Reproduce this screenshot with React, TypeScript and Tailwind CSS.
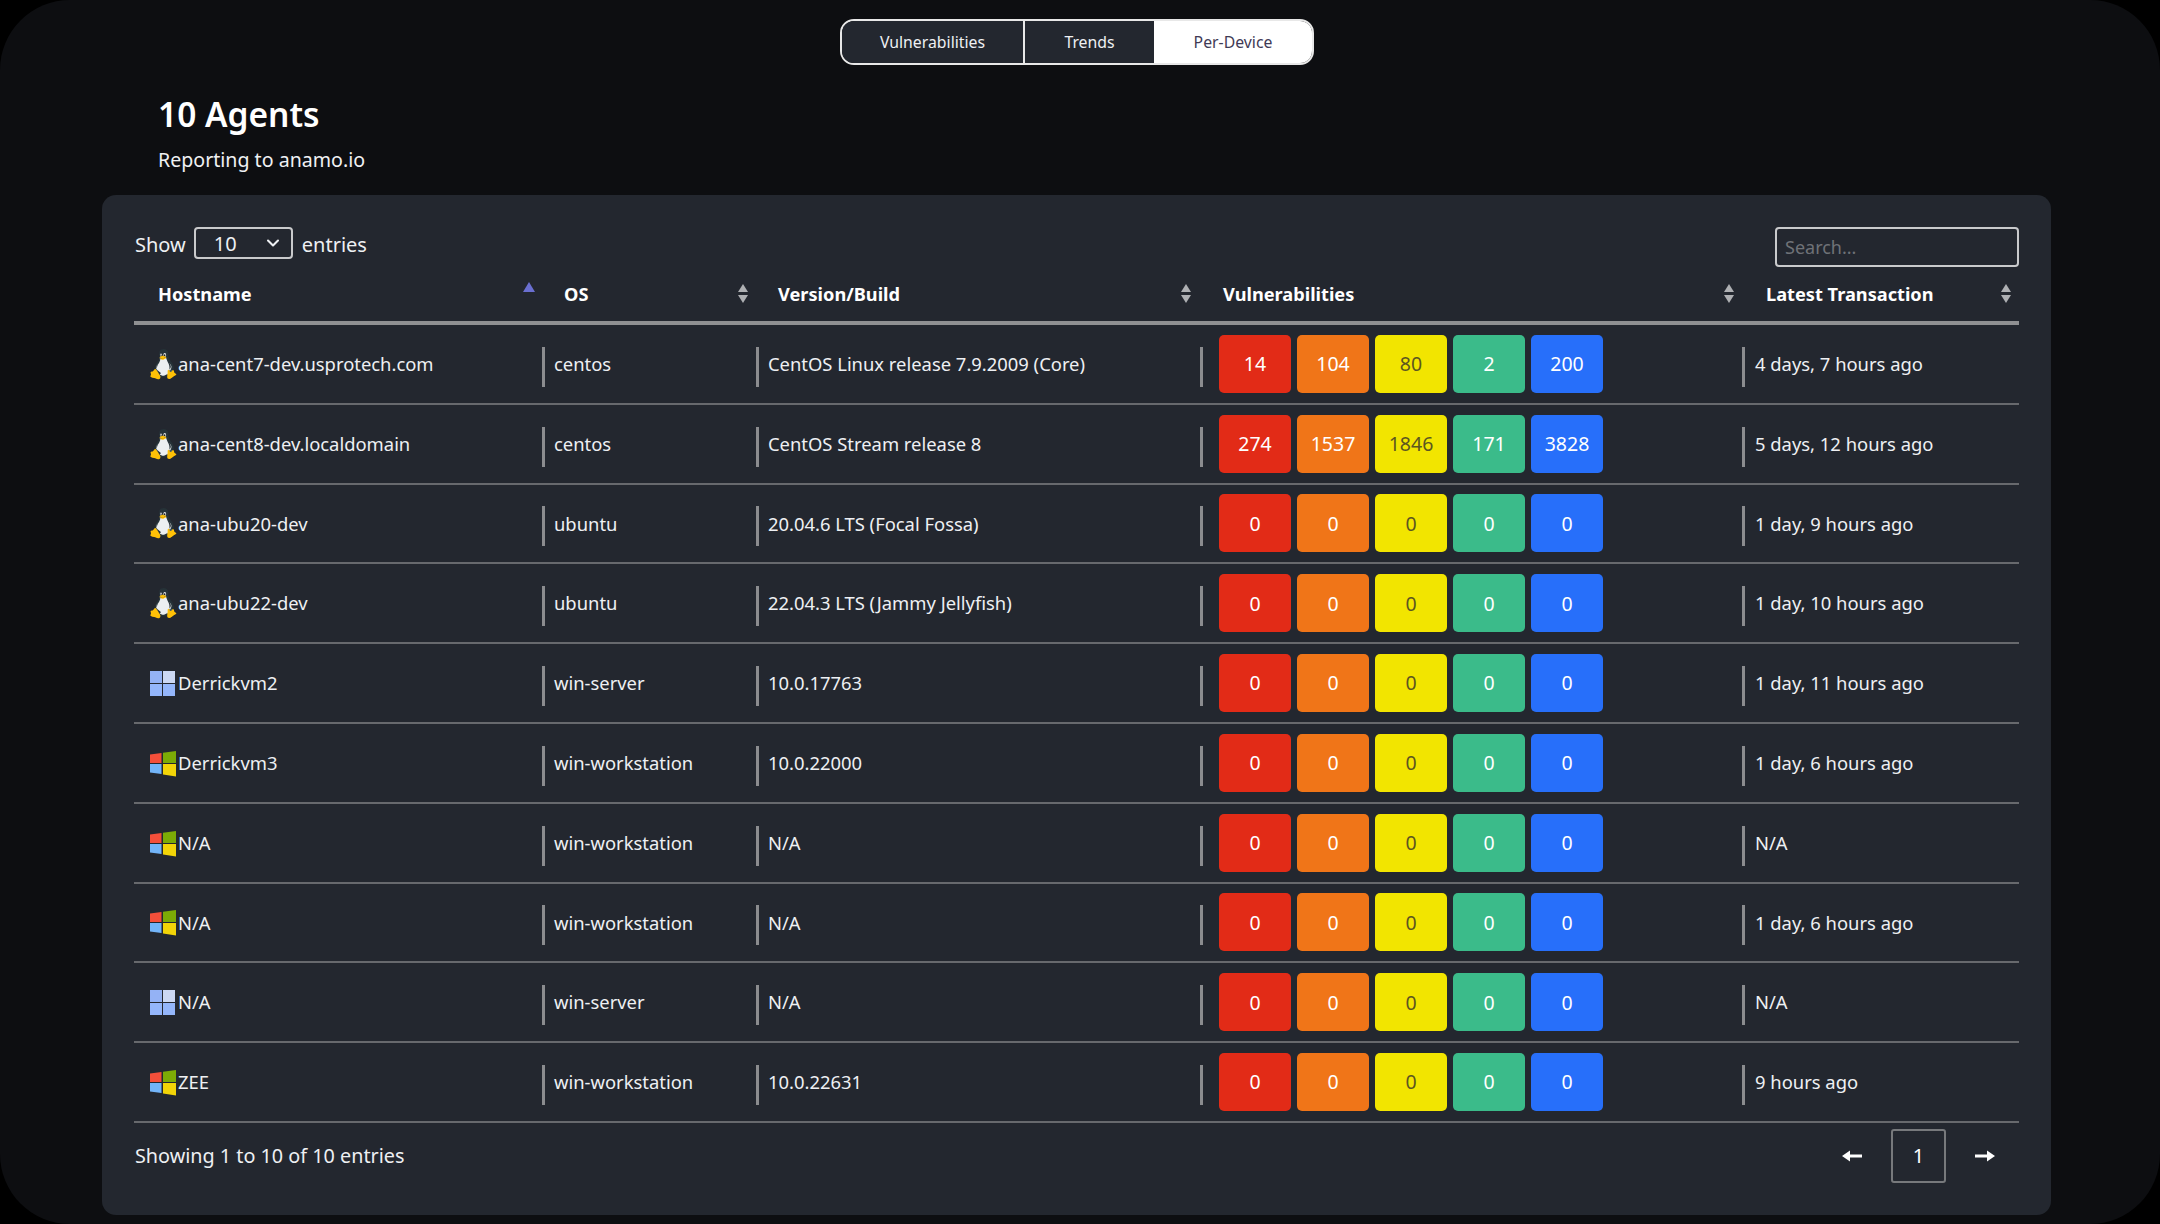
import { FcLinux } from 'react-icons/fc'
import { ChevronDown } from 'lucide-react'

type Kind = 'linux' | 'server' | 'workstation'

const agents: { kind: Kind; host: string; os: string; version: string; counts: number[]; last: string }[] = [
  { kind: 'linux', host: 'ana-cent7-dev.usprotech.com', os: 'centos', version: 'CentOS Linux release 7.9.2009 (Core)', counts: [14, 104, 80, 2, 200], last: '4 days, 7 hours ago' },
  { kind: 'linux', host: 'ana-cent8-dev.localdomain', os: 'centos', version: 'CentOS Stream release 8', counts: [274, 1537, 1846, 171, 3828], last: '5 days, 12 hours ago' },
  { kind: 'linux', host: 'ana-ubu20-dev', os: 'ubuntu', version: '20.04.6 LTS (Focal Fossa)', counts: [0, 0, 0, 0, 0], last: '1 day, 9 hours ago' },
  { kind: 'linux', host: 'ana-ubu22-dev', os: 'ubuntu', version: '22.04.3 LTS (Jammy Jellyfish)', counts: [0, 0, 0, 0, 0], last: '1 day, 10 hours ago' },
  { kind: 'server', host: 'Derrickvm2', os: 'win-server', version: '10.0.17763', counts: [0, 0, 0, 0, 0], last: '1 day, 11 hours ago' },
  { kind: 'workstation', host: 'Derrickvm3', os: 'win-workstation', version: '10.0.22000', counts: [0, 0, 0, 0, 0], last: '1 day, 6 hours ago' },
  { kind: 'workstation', host: 'N/A', os: 'win-workstation', version: 'N/A', counts: [0, 0, 0, 0, 0], last: 'N/A' },
  { kind: 'workstation', host: 'N/A', os: 'win-workstation', version: 'N/A', counts: [0, 0, 0, 0, 0], last: '1 day, 6 hours ago' },
  { kind: 'server', host: 'N/A', os: 'win-server', version: 'N/A', counts: [0, 0, 0, 0, 0], last: 'N/A' },
  { kind: 'workstation', host: 'ZEE', os: 'win-workstation', version: '10.0.22631', counts: [0, 0, 0, 0, 0], last: '9 hours ago' },
]

const badgeColors = [
  'bg-[#e22b17] text-white',
  'bg-[#f07518] text-white',
  'bg-[#f2e500] text-[#5c5620]',
  'bg-[#3bbb8a] text-white',
  'bg-[#276ffa] text-white',
]

const columns = 'grid grid-cols-[408px_214px_444px_542px_276px]'

function WinServer() {
  return (
    <svg width="26" height="26" viewBox="0 0 26 26" className="shrink-0 mt-[2px]">
      <rect x="0" y="0" width="12" height="12" fill="#94b2f5" />
      <rect x="13" y="0" width="12" height="12" fill="#cbd7f3" />
      <rect x="0" y="13" width="12" height="12" fill="#94b6fb" />
      <rect x="13" y="13" width="12" height="12" fill="#94b6fb" />
    </svg>
  )
}

function WinWorkstation() {
  return (
    <svg width="26" height="26" viewBox="0 0 26 26" className="shrink-0 mt-[2px]">
      <polygon points="0,3.5 11.5,2 11.5,12 0,12" fill="#f44f3a" />
      <polygon points="13,1.8 26,0 26,12 13,12" fill="#7cab06" />
      <polygon points="0,13 11.5,13 11.5,23 0,21.5" fill="#72b4f8" />
      <polygon points="13,13 26,13 26,25.5 13,23.5" fill="#f2d408" />
    </svg>
  )
}

function SortIcon({ active }: { active?: boolean }) {
  if (active) {
    return (
      <svg width="12" height="10" viewBox="0 0 12 10" className="mb-[14px]">
        <polygon points="6,0 12,10 0,10" fill="#6a6fd0" />
      </svg>
    )
  }
  return (
    <svg width="12" height="20" viewBox="0 0 12 20">
      <polygon points="6,0 11,8 1,8" fill="#aeb0b3" />
      <polygon points="1,11 11,11 6,19" fill="#aeb0b3" />
    </svg>
  )
}

function Head({ label, active, pad, sortRight }: { label: string; active?: boolean; pad: string; sortRight: string }) {
  return (
    <div className={`flex items-center justify-between font-bold text-[18.2px] text-white pt-[2px] ${pad} ${sortRight}`}>
      <span>{label}</span>
      <SortIcon active={active} />
    </div>
  )
}

function Cell({ children, gap }: { children: React.ReactNode; gap: string }) {
  return (
    <div className={`flex items-center pr-2 ${gap}`}>
      <span className="w-[3px] h-[40px] mt-[6px] bg-[#8b8c8f] shrink-0" />
      <span className="whitespace-nowrap">{children}</span>
    </div>
  )
}

export default function App() {
  return (
    <div className="w-[2160px] h-[1224px] bg-black overflow-hidden" style={{ fontFamily: '"Noto Sans", sans-serif' }}>
      <div className="w-full h-full rounded-[70px] bg-[#0d0e11] flex flex-col text-[#eef0f3] text-[18.4px]">
        <div className="flex justify-center pt-[19px] pr-[6px]">
          <div className="flex h-[46px] w-[474px] rounded-[14px] border-2 border-[#e8e8e8] overflow-hidden text-[15.8px]">
            <div className="w-[183px] flex items-center justify-center bg-[#23272f] border-r-2 border-[#e8e8e8] pt-[1px]">Vulnerabilities</div>
            <div className="w-[129px] flex items-center justify-center bg-[#23272f] pt-[1px]">Trends</div>
            <div className="flex-1 flex items-center justify-center bg-white text-[#3f3a55] pt-[1px]">Per-Device</div>
          </div>
        </div>

        <div className="pl-[158px] mt-[25px] h-[105px]">
          <h1 className="text-[33.5px] font-semibold text-white leading-[48px]">10 Agents</h1>
          <p className="text-[19.6px] leading-[28px] mt-[8px] text-[#f0f1f3]">Reporting to anamo.io</p>
        </div>

        <div className="ml-[102px] w-[1949px] h-[1020px] rounded-[14px] bg-[#23272f] px-[32px] pt-[32px]">
          <div className="flex justify-between h-[40px]">
            <div className="flex items-start gap-[9px] text-[20px] leading-[35px] pl-[1px]">
              <span>Show</span>
              <div className="w-[99px] h-[32px] -ml-[1px] border-2 border-[#c9cacc] rounded-[4px] flex items-center justify-between pl-[18px] pr-[8px]">
                <span>10</span>
                <ChevronDown size={20} strokeWidth={2.5} />
              </div>
              <span>entries</span>
            </div>
            <div className="w-[244px] h-[40px] border-2 border-[#c9cacc] rounded-[4px] flex items-center px-[8px] text-[18px] text-[#6f7277]">
              Search...
            </div>
          </div>

          <div className={`${columns} h-[59px] items-center border-b-4 border-[#8f9092] mt-[-1px]`}>
            <Head label="Hostname" active pad="pl-[24px]" sortRight="pr-[7px]" />
            <Head label="OS" pad="pl-[22px]" sortRight="pr-[7px]" />
            <Head label="Version/Build" pad="pl-[22px]" sortRight="pr-[8px]" />
            <Head label="Vulnerabilities" pad="pl-[23px]" sortRight="pr-[7px]" />
            <Head label="Latest Transaction" pad="pl-[24px]" sortRight="pr-[6px]" />
          </div>

          {agents.map((agent, i) => (
            <div key={i} className={`${columns} h-[79.8px] items-center border-b-2 border-[#67696d]`}>
              <div className="flex items-center pl-[16px]">
                {agent.kind === 'linux' && <FcLinux size={40} className="shrink-0 -ml-[7px] -mr-[7px]" />}
                {agent.kind === 'server' && <WinServer />}
                {agent.kind === 'workstation' && <WinWorkstation />}
                <span className="pl-[2px]">{agent.host}</span>
              </div>
              <Cell gap="gap-[9px]">{agent.os}</Cell>
              <Cell gap="gap-[9px]">{agent.version}</Cell>
              <div className="flex items-center">
                <span className="w-[3px] h-[40px] mt-[6px] bg-[#8b8c8f] shrink-0 mr-[16px]" />
                <div className="flex gap-[6px] text-[19.5px]">
                  {agent.counts.map((count, j) => (
                    <div key={j} className={`w-[72px] h-[58px] rounded-[5px] flex items-center justify-center ${badgeColors[j]}`}>
                      {count}
                    </div>
                  ))}
                </div>
              </div>
              <Cell gap="gap-[10px]">{agent.last}</Cell>
            </div>
          ))}

          <div className="flex justify-between items-center h-[62px] mt-[2px] pr-[24px]">
            <span className="text-[19.8px] -mt-[1px] pl-[1px]">Showing 1 to 10 of 10 entries</span>
            <div className="flex items-center gap-[29px] text-white text-[20px]">
              <svg width="20" height="12" viewBox="0 0 20 12"><path d="M20 4.5H8V0.5L0 6l8 5.5v-4h12z" fill="#fff" /></svg>
              <div className="w-[55px] h-[54px] border-2 border-[#77797c] rounded-[3px] flex items-center justify-center">1</div>
              <svg width="20" height="12" viewBox="0 0 20 12"><path d="M0 4.5h12V0.5L20 6l-8 5.5v-4H0z" fill="#fff" /></svg>
            </div>
          </div>
        </div>
      </div>
    </div>
  )
}
